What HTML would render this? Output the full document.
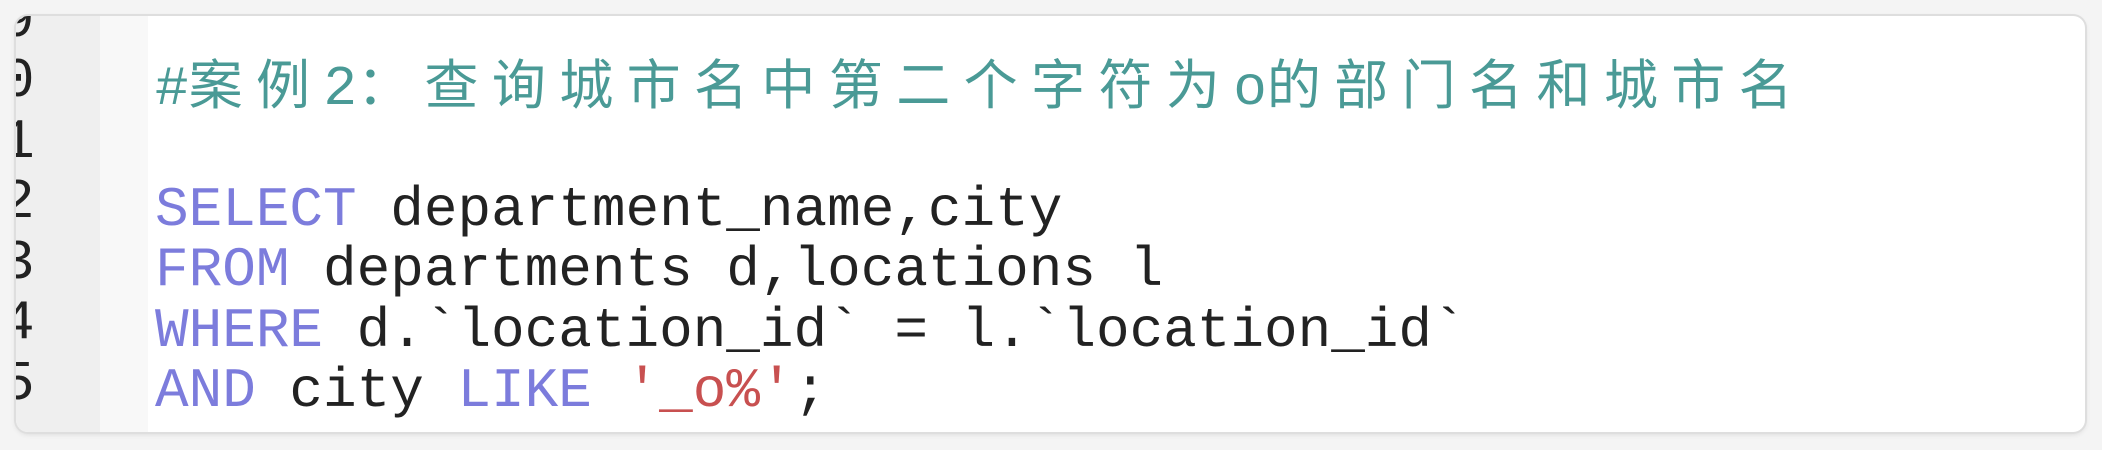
<!DOCTYPE html>
<html><head><meta charset="utf-8"><style>
html,body{margin:0;padding:0;}
body{width:2102px;height:450px;background:#f4f4f4;position:relative;overflow:hidden;}
.card{position:absolute;left:16px;top:16px;width:2069px;height:416px;background:#fff;border-radius:12px;box-shadow:0 0 0 2px #dedede,0 2px 6px rgba(0,0,0,.12);overflow:hidden;}
.gut{position:absolute;left:0;top:0;width:84px;height:100%;background:#efefef;}
.strip{position:absolute;left:84px;top:0;width:48px;height:100%;background:#f8f8f8;}
.nums,.code{position:absolute;font-family:"Liberation Mono","Noto Sans CJK SC",monospace;font-size:56px;line-height:60.5px;white-space:pre;}
.nums{left:-15px;top:-86px;color:#222;}
.code{left:139px;top:-26px;color:#222;}
.c{color:#4a9a96;}
.cj{font-family:"Noto Sans CJK SC","WenQuanYi Zen Hei",sans-serif;font-size:54px;letter-spacing:13.4px;}
.k{color:#7c7cdc;}
.s{color:#c85050;}
</style></head><body>
<div class="card">
<div class="gut"></div><div class="strip"></div>
<div class="nums">8
9
0
1
2
3
4
5</div>
<div class="code"><span class="c">
#<span class="cj">案例</span>2<span class="cj">：查询城市名中第二个字符为</span>o<span class="cj">的部门名和城市名</span></span>

<span class="k">SELECT</span> department_name,city
<span class="k">FROM</span> departments d,locations l
<span class="k">WHERE</span> d.`location_id` = l.`location_id`
<span class="k">AND</span> city <span class="k">LIKE</span> <span class="s">'_o%'</span>;</div>
</div>
</body></html>
